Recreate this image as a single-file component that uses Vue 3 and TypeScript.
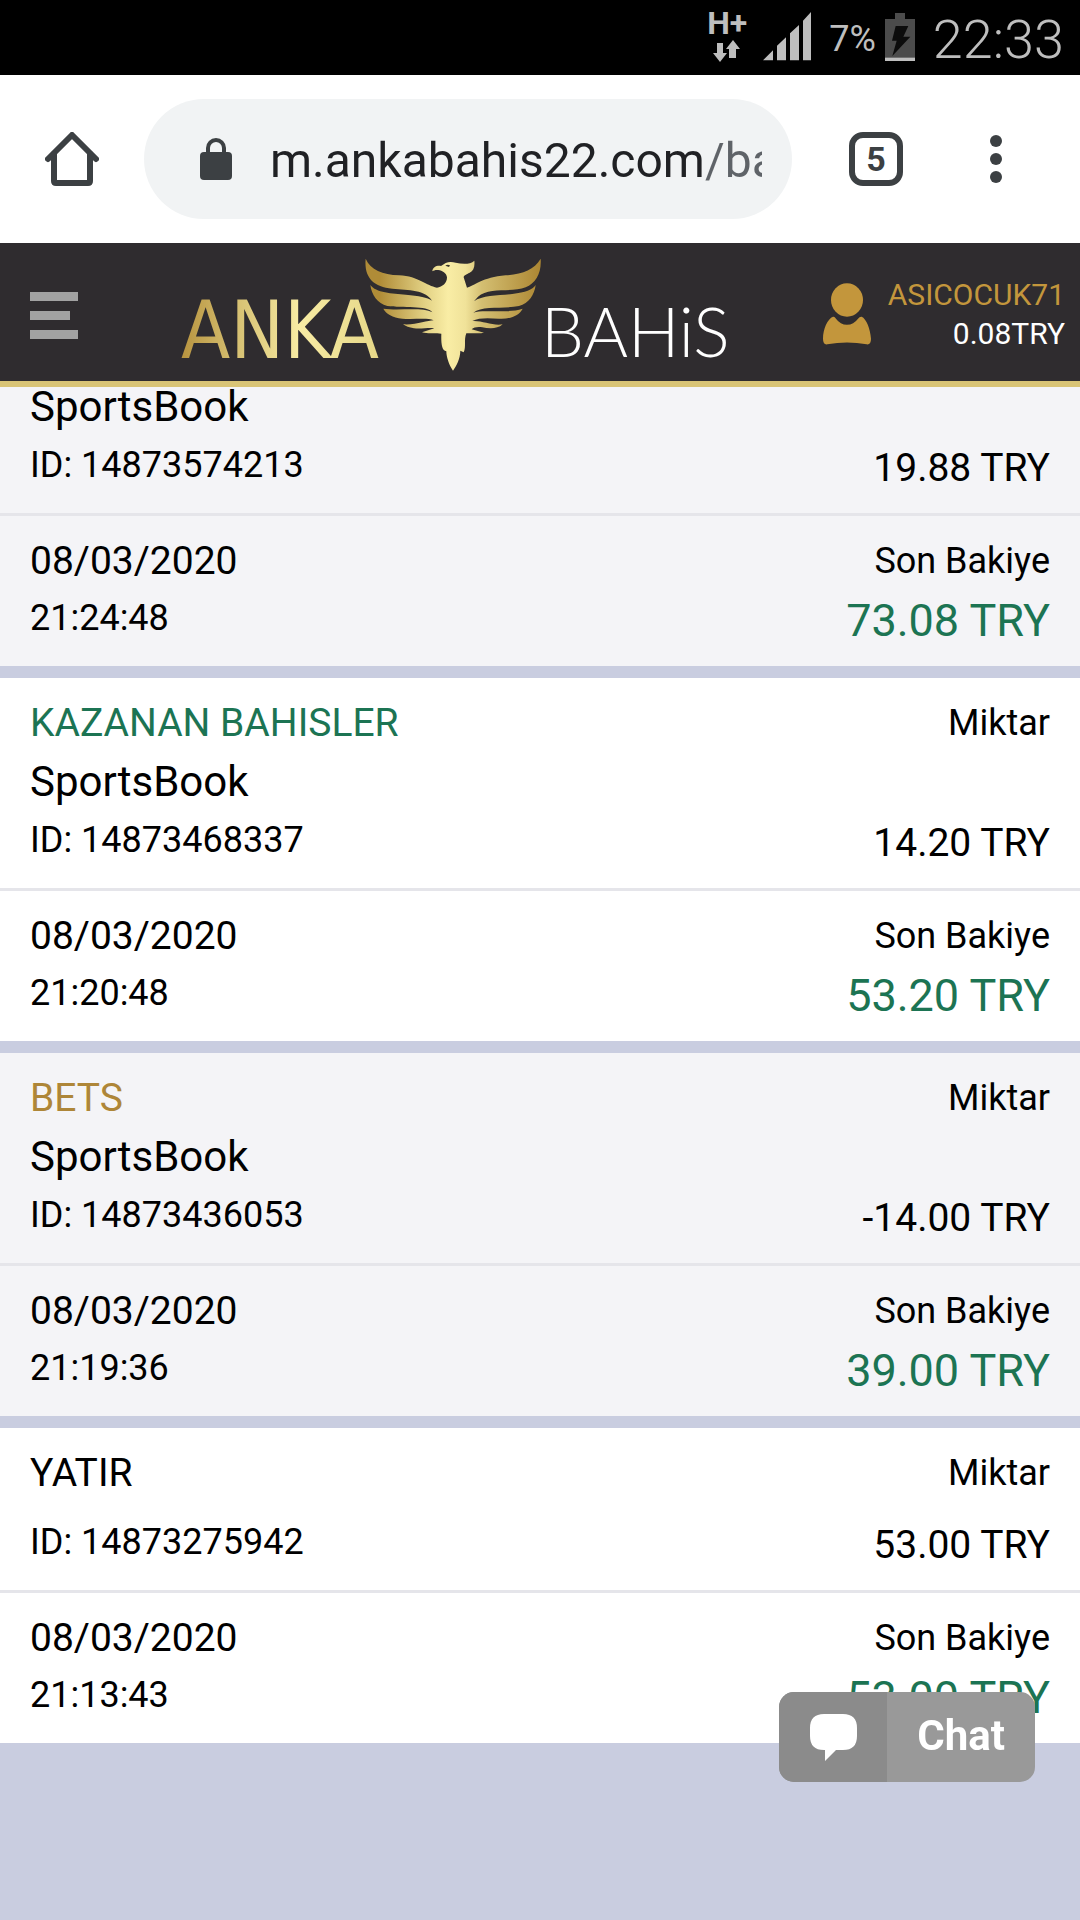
<script setup lang="ts">
import { ref } from 'vue'

interface Transaction {
  id: string
  kind?: string
  tone?: 'won' | 'bet'
  product?: string
  amount: string
  date: string
  time: string
  balance: string
  scrolled?: boolean
}

const transactions: Transaction[] = [
  { id: '14873574213', product: 'SportsBook', amount: '19.88', date: '08/03/2020', time: '21:24:48', balance: '73.08', scrolled: true },
  { id: '14873468337', kind: 'KAZANAN BAHISLER', tone: 'won', product: 'SportsBook', amount: '14.20', date: '08/03/2020', time: '21:20:48', balance: '53.20' },
  { id: '14873436053', kind: 'BETS', tone: 'bet', product: 'SportsBook', amount: '-14.00', date: '08/03/2020', time: '21:19:36', balance: '39.00' },
  { id: '14873275942', kind: 'YATIR', amount: '53.00', date: '08/03/2020', time: '21:13:43', balance: '53.00' },
]

const address = ref('m.ankabahis22.com/ba')
</script>

<template>
  <div class="screen">
    <div class="status">
      <div class="network">
        <span class="network-type">H+</span>
        <svg width="28" height="24" viewBox="0 0 28 24" fill="#bebebe" aria-hidden="true">
          <path d="M4 4h6v10h4l-7 9-7-9h4zM16 19V10h-3l7-9 7 9h-4v9z" />
        </svg>
      </div>
      <svg class="signal" width="48" height="49" viewBox="0 0 144 147" fill="#bebebe" aria-hidden="true">
        <path d="M0 145L30 115V145ZM42 101L69 76V145H42ZM81 64L108 39V145H81ZM120 26L144 0V145H120Z" />
      </svg>
      <span class="percent">7%</span>
      <svg class="battery" width="30" height="48" viewBox="0 0 90 144" aria-hidden="true">
        <path d="M0 18H30V0H60V18H90V144H0Z" fill="#4b4b4b" />
        <path d="M32 39H70L55 71H76L22 129L35 83H21Z" fill="#0c0c0c" />
        <path d="M0 134H90V144H0Z" fill="#bebebe" />
      </svg>
      <time class="clock">22:33</time>
    </div>

    <div class="toolbar">
      <button class="home" type="button" aria-label="Home">
        <svg width="54" height="54" viewBox="0 0 54 54" fill="none" stroke="#3c4043" stroke-width="6" stroke-linejoin="round" stroke-linecap="round" aria-hidden="true">
          <path d="M3 27L27 3L51 27" />
          <path d="M9 22V49Q9 51 11 51H43Q45 51 45 49V22" />
        </svg>
      </button>
      <div class="omnibox">
        <svg width="32" height="42" viewBox="0 0 32 42" aria-hidden="true">
          <path d="M8 17V10a8 8 0 0 1 16 0v7" fill="none" stroke="#3c4043" stroke-width="4" />
          <rect y="14" width="32" height="28" rx="4" fill="#3c4043" />
        </svg>
        <input v-model="address" class="address" type="text" aria-label="Address" spellcheck="false" />
      </div>
      <button class="tool" type="button" aria-label="Tabs"><span class="tab-count">5</span></button>
      <button class="tool" type="button" aria-label="Menu">
        <svg width="12" height="48" viewBox="0 0 12 48" fill="#3c4043" aria-hidden="true">
          <circle cx="6" cy="6" r="6" /><circle cx="6" cy="24" r="6" /><circle cx="6" cy="42" r="6" />
        </svg>
      </button>
    </div>

    <header class="header">
      <button class="menu" type="button" aria-label="Menu"><i /><i /><i /></button>
      <a class="logo" href="#">
        <span class="anka">ANKA</span>
        <svg class="bird" width="176" height="114" viewBox="48 54 528 342" aria-hidden="true">
          <defs>
            <linearGradient id="gold" gradientUnits="userSpaceOnUse" x1="50" y1="0" x2="576" y2="0">
              <stop offset="0.08" stop-color="#b08c37" />
              <stop offset="0.34" stop-color="#e3d285" />
              <stop offset="0.47" stop-color="#f9eda5" />
              <stop offset="0.57" stop-color="#f0e299" />
              <stop offset="0.66" stop-color="#d4bf72" />
              <stop offset="1" stop-color="#ac8632" />
            </linearGradient>
          </defs>
          <path fill="url(#gold)" d="M250 94C251 82 262 76 276 78L290 69C300 65 310 66 320 68C340 73 364 74 376 62C378 80 374 92 362 98C352 103 344 106 344 112L354 143C375 138 400 112 470 106C520 102 555 90 575 56C578 100 560 130 530 142C490 158 420 140 387 170L375 184C400 165 450 167 490 162C530 157 550 150 560 135C556 165 540 190 510 198C460 208 400 195 373 218C400 207 470 222 521 206C510 228 480 238 450 236C420 234 390 232 370 243C400 241 430 258 461 253C445 268 420 266 400 262C385 260 375 262 368 268L405 278C390 282 370 278 352 280C344 300 352 320 344 337L334 332C334 355 322 378 312 392C300 375 292 350 292 334C278 332 276 310 277 281C255 278 235 282 219 277L256 265C240 262 215 268 195 265C180 263 170 258 162 253C200 256 235 241 254 241C235 232 190 240 160 236C130 232 112 222 103 206C150 213 220 200 250 217C235 195 160 205 115 198C85 190 68 165 64 135C80 158 130 161 170 164C210 167 235 172 249 182C230 150 180 150 130 146C70 140 45 110 50 56C65 90 100 103 150 106C210 109 232 138 264 143C280 141 294 130 294 112C292 98 280 92 268 90C260 89 254 91 250 94Z" />
          <path d="M289 77Q296 72 303 76L300 81Z" fill="#3a3528" />
        </svg>
        <span class="bahis">BAHiS</span>
      </a>
      <a class="account" href="#">
        <svg width="48" height="62" viewBox="66 133 144 186" fill="#c3963c" aria-hidden="true">
          <ellipse cx="138" cy="184" rx="48" ry="50" />
          <path d="M96 234C80 240 66 270 66 300Q66 319 79 317Q138 306 197 317Q210 319 210 300C208 270 196 240 182 234Q176 233 171 240Q158 258 138 258Q118 258 105 240Q101 233 96 234Z" />
        </svg>
        <span class="account-text">
          <span class="user">ASICOCUK71</span>
          <span>0.08TRY</span>
        </span>
      </a>
    </header>

    <main class="list">
      <article v-for="t in transactions" :key="t.id" class="card">
        <div class="row" :class="{ scrolled: t.scrolled }">
          <div class="col">
            <span v-if="t.kind" class="kind" :class="t.tone">{{ t.kind }}</span>
            <span class="product">{{ t.product }}</span>
            <span class="small">ID: {{ t.id }}</span>
          </div>
          <div class="col end">
            <span v-if="t.kind" class="label">Miktar</span>
            <span class="amount">{{ t.amount }} TRY</span>
          </div>
        </div>
        <div class="row">
          <div class="col">
            <span class="kind">{{ t.date }}</span>
            <span class="small">{{ t.time }}</span>
          </div>
          <div class="col end">
            <span class="label">Son Bakiye</span>
            <span class="amount balance">{{ t.balance }} TRY</span>
          </div>
        </div>
      </article>
    </main>

    <button class="chat" type="button">
      <span class="chat-icon">
        <svg width="47" height="47" viewBox="0 0 47 47" fill="#fff" aria-hidden="true">
          <path d="M14 0H33Q47 0 47 14V22Q47 36 33 36H26L15 47V36H14Q0 36 0 22V14Q0 0 14 0Z" />
        </svg>
      </span>
      <span class="chat-label">Chat</span>
    </button>
  </div>
</template>

<style>
body {
  background: #c9cde0;
}
</style>

<style scoped>
.screen {
  min-height: 100vh;
  overflow: hidden;
  background: #c9cde0;
  color: #000;
  font-family: Roboto, "Noto Sans", sans-serif;
}

button {
  padding: 0;
  border: 0;
  background: none;
  font: inherit;
  cursor: pointer;
}

a {
  color: inherit;
  text-decoration: none;
}

svg {
  display: block;
  flex: none;
}

.status {
  display: flex;
  justify-content: flex-end;
  align-items: center;
  height: 73px;
  padding: 0 16px 2px 0;
  background: #000;
  color: #bebebe;
}

.network {
  display: flex;
  flex-direction: column;
  align-items: center;
  gap: 4px;
  margin-right: 16px;
}

.network-type {
  font-size: 32px;
  font-weight: 700;
  line-height: 24px;
}

.percent {
  margin: 0 9px 0 18px;
  padding-top: 4px;
  font-size: 36px;
  line-height: 48px;
}

.clock {
  margin-left: 18px;
  padding-top: 6px;
  font-size: 54px;
  font-weight: 350;
  line-height: 66px;
}

.toolbar {
  display: flex;
  align-items: center;
  height: 168px;
  padding-right: 24px;
  background: #fff;
}

.home {
  display: flex;
  justify-content: center;
  width: 144px;
}

.omnibox {
  display: flex;
  flex: 1;
  align-items: center;
  gap: 38px;
  min-width: 0;
  height: 120px;
  margin-right: 24px;
  padding: 0 30px 0 56px;
  box-sizing: border-box;
  border-radius: 60px;
  background: #f1f3f4;
}

.address {
  flex: 1;
  min-width: 0;
  height: 72px;
  padding: 4px 0 0;
  border: 0;
  outline: 0;
  background: linear-gradient(90deg, #202124 434px, #5f6368 434px);
  -webkit-background-clip: text;
  background-clip: text;
  color: transparent;
  font: 48px/72px Roboto, sans-serif;
}

.tool {
  display: flex;
  justify-content: center;
  align-items: center;
  width: 120px;
  height: 120px;
}

.tab-count {
  width: 42px;
  height: 42px;
  border: 6px solid #3c4043;
  border-radius: 14px;
  color: #3c4043;
  font-size: 34px;
  font-weight: 700;
  line-height: 42px;
  text-align: center;
}

.header {
  position: relative;
  z-index: 1;
  display: flex;
  align-items: center;
  height: 138px;
  padding: 0 15px 0 30px;
  border-bottom: 6px solid #d9c476;
  background: #2f2c2f;
}

.menu {
  display: flex;
  flex-direction: column;
  gap: 10px;
  width: 48px;
  margin-top: 6px;
}

.menu i {
  height: 9px;
  background: #a2a2a2;
}

.menu i:nth-child(2) {
  width: 40px;
}

.logo {
  display: flex;
  align-items: flex-end;
  height: 138px;
  margin: 0 auto 0 103px;
}

.anka {
  background: linear-gradient(90deg, #b7933f, #d3bc6d 25%, #f8eca4 60%, #e6d788);
  -webkit-background-clip: text;
  background-clip: text;
  color: transparent;
  font: 80px/100px "DejaVu Sans Condensed", sans-serif;
}

.bird {
  margin: 0 0 9px -14px;
}

.bahis {
  color: #fff;
  font: 300 68px/100px Lato, sans-serif;
}

.account {
  display: flex;
  align-items: center;
  gap: 17px;
  margin-top: 3px;
  color: #fff;
  font-size: 30px;
  line-height: 39px;
}

.account-text {
  display: flex;
  flex-direction: column;
  align-items: flex-end;
}

.user {
  color: #c3963c;
}

.card {
  margin-bottom: 12px;
  background: #fff;
}

.card:nth-child(odd) {
  background: #f4f4f7;
}

.row {
  display: flex;
  justify-content: space-between;
  padding: 22px 30px 26px;
}

.row + .row {
  border-top: 3px solid #e5e5ea;
}

.row.scrolled {
  margin-top: -4px;
  padding-top: 0;
}

.list {
  display: flow-root;
}

.col {
  display: flex;
  flex-direction: column;
  gap: 12px;
}

.end {
  align-items: flex-end;
  justify-content: space-between;
}

.end > :only-child {
  margin-top: auto;
}

.kind {
  font-size: 39px;
  line-height: 46px;
}

.won,
.balance {
  color: #1c7453;
}

.bet {
  color: #ae8638;
}

.product {
  font-size: 42px;
  line-height: 48px;
}

.small {
  font-size: 36px;
  line-height: 44px;
}

.label {
  font-size: 36px;
  line-height: 46px;
}

.amount {
  font-size: 39px;
  line-height: 38px;
}

.amount.balance {
  font-size: 45px;
}

.chat {
  position: fixed;
  right: 45px;
  bottom: 138px;
  z-index: 2;
  display: flex;
  overflow: hidden;
  height: 90px;
  border-radius: 15px;
  background: #999;
  color: #fff;
  font-size: 42px;
  font-weight: 700;
  line-height: 88px;
}

.chat-icon {
  display: flex;
  justify-content: center;
  align-items: center;
  width: 108px;
  height: 90px;
  background: #8b8b8b;
}

.chat-label {
  padding: 0 30px;
}
</style>
